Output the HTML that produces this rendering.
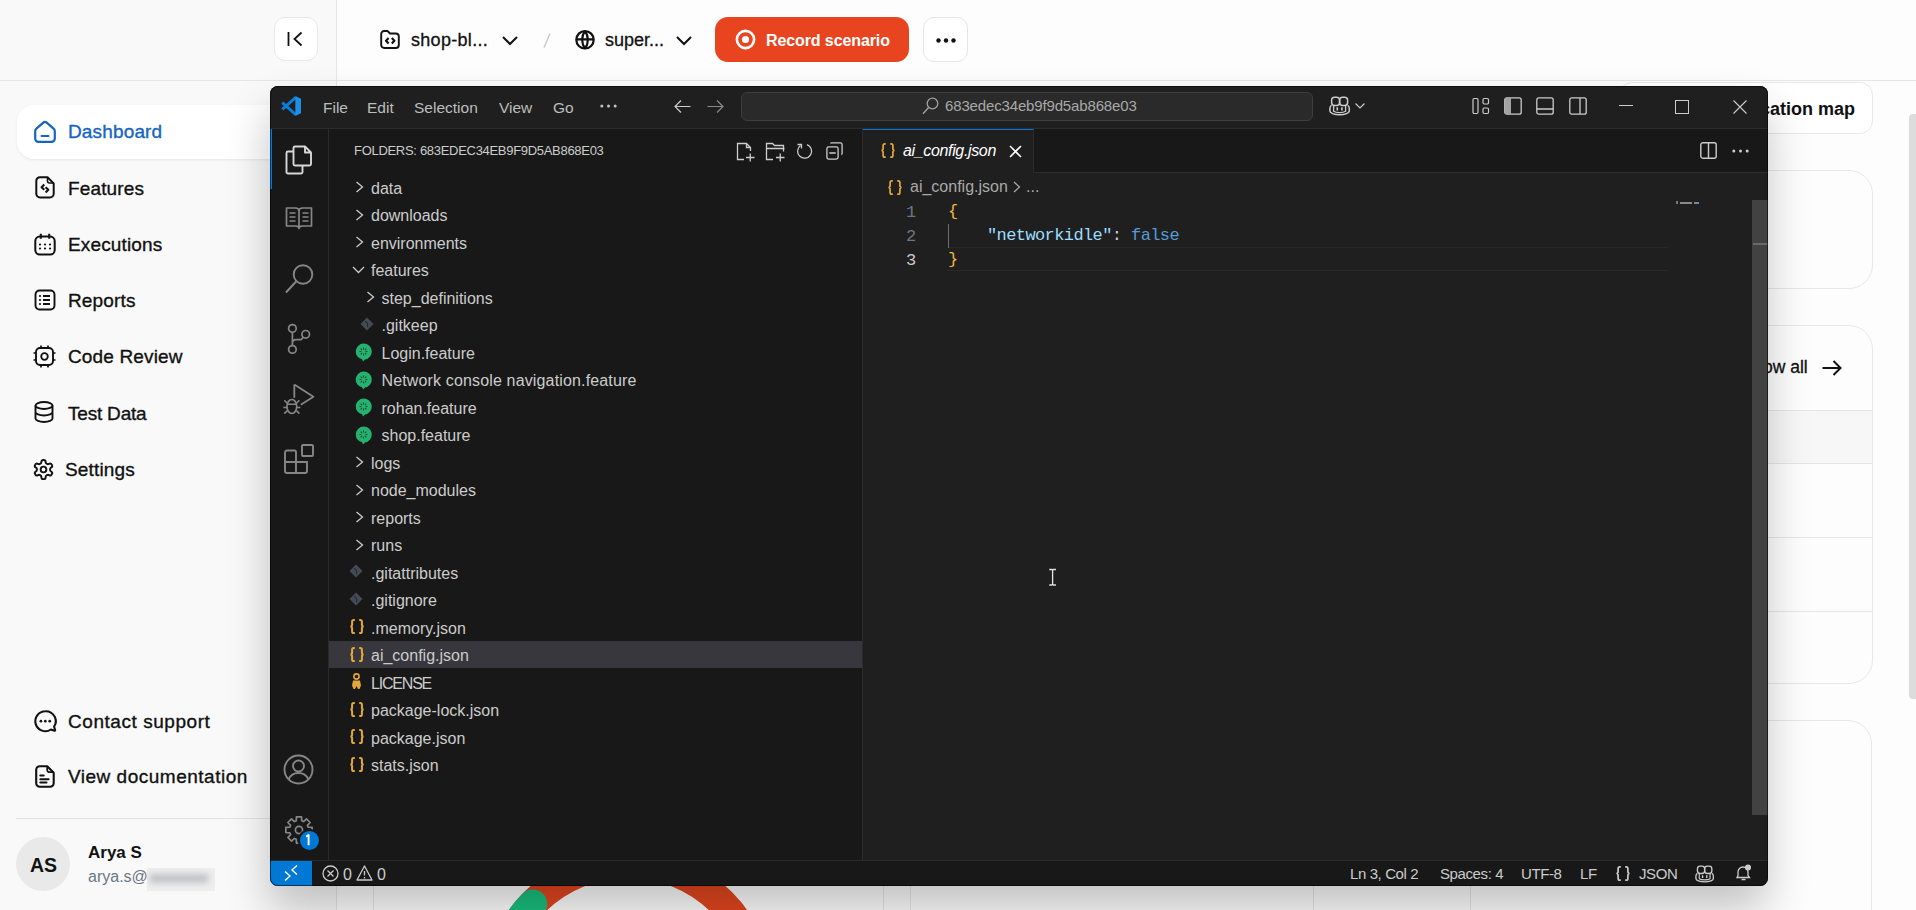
<!DOCTYPE html>
<html><head><meta charset="utf-8">
<style>
*{box-sizing:border-box;margin:0;padding:0}
html,body{width:1916px;height:910px;overflow:hidden;background:#fdfdfd;font-family:"Liberation Sans",sans-serif}
.abs{position:absolute}
svg{position:absolute;overflow:visible}
#side{left:0;top:0;width:337px;height:910px;background:#f9f9f9;border-right:1px solid #e6e6e6}
#hdr{left:337px;top:0;width:1579px;height:80px;background:#fdfdfd}
#hline{left:0;top:80px;width:1916px;height:1px;background:#e6e6e6}
.nav{position:absolute;left:68px;font-size:19px;font-weight:500;color:#111;white-space:nowrap;letter-spacing:0.15px;-webkit-text-stroke:0.35px currentColor}
.vt{position:absolute;white-space:nowrap;color:#cccccc;font-size:16px;line-height:20px}
.row{position:absolute;left:329px;width:533px;height:27.5px}
</style></head>
<body>
<!-- ============ WEB APP ============ -->
<div id="side" class="abs"></div>
<div id="hdr" class="abs"></div>
<div id="hline" class="abs"></div>

<!-- collapse button -->
<div class="abs" style="left:274px;top:17px;width:44px;height:44px;border:1px solid #e8e8e8;border-radius:11px;background:#fff"></div>
<svg style="left:286px;top:29px" width="20" height="20" viewBox="0 0 20 20"><path d="M2.5 3v14M15.5 3.5L8.5 10l7 6.5" fill="none" stroke="#111" stroke-width="1.8"/></svg>

<!-- active nav -->
<div class="abs" style="left:17px;top:105px;width:300px;height:54px;background:#fff;border-radius:17px;box-shadow:0 1px 3px rgba(0,0,0,0.08)"></div>
<svg style="left:34px;top:119.5px" width="22" height="23" viewBox="0 0 22 23"><path d="M2.4 8.6C1.6 9.3 1.2 10.2 1.2 11.2V18.6A3.2 3.2 0 0 0 4.4 21.8H17.6A3.2 3.2 0 0 0 20.8 18.6V11.2C20.8 10.2 20.4 9.3 19.6 8.6L12.7 2.6C11.7 1.7 10.3 1.7 9.3 2.6z" fill="none" stroke="#1565c0" stroke-width="2.2" stroke-linejoin="round"/><path d="M7.6 16h6.8" stroke="#1565c0" stroke-width="2.2" stroke-linecap="round"/></svg>
<div class="nav" style="top:121px;color:#1565c0">Dashboard</div>
<svg style="left:35px;top:176px" width="20" height="23" viewBox="0 0 20 23"><path d="M5 1.2h7.5l6.2 6.2V17.8a3.7 3.7 0 0 1-3.7 3.7H5a3.7 3.7 0 0 1-3.7-3.7V4.9A3.7 3.7 0 0 1 5 1.2z" fill="none" stroke="#111" stroke-width="2" stroke-linejoin="round"/><path d="M12.5 1.5v3.5a2 2 0 0 0 2 2h4" fill="none" stroke="#111" stroke-width="1.6"/><path d="M9.3 8.6L6.6 11.2l2.7 2.6M10.6 11.2l2.7 2.6-2.7 2.6" fill="none" stroke="#111" stroke-width="2.1" stroke-linejoin="round"/></svg>
<div class="nav" style="top:178px">Features</div>
<svg style="left:34px;top:233px" width="22" height="23" viewBox="0 0 22 23"><rect x="1.3" y="3.6" width="19.4" height="18" rx="4.5" fill="none" stroke="#111" stroke-width="2"/><path d="M6.8 0.8v5M15.2 0.8v5" stroke="#111" stroke-width="2"/><g fill="#111"><circle cx="6" cy="11.5" r="1.1"/><circle cx="11" cy="11.5" r="1.1"/><circle cx="16" cy="11.5" r="1.1"/><circle cx="6" cy="15.5" r="1.1"/><circle cx="11" cy="15.5" r="1.1"/><circle cx="16" cy="15.5" r="1.1"/></g></svg>
<div class="nav" style="top:234px">Executions</div>
<svg style="left:34px;top:289px" width="22" height="22" viewBox="0 0 22 22"><rect x="1.5" y="1.5" width="19" height="19" rx="4" fill="none" stroke="#111" stroke-width="1.9"/><path d="M9 7h7M9 11h7M9 15h7" stroke="#111" stroke-width="1.8"/><g fill="#111"><circle cx="6" cy="7" r="1.1"/><circle cx="6" cy="11" r="1.1"/><circle cx="6" cy="15" r="1.1"/></g></svg>
<div class="nav" style="top:290px">Reports</div>
<svg style="left:33px;top:345px" width="23" height="23" viewBox="0 0 23 23"><rect x="3" y="3" width="17" height="17" rx="4" fill="none" stroke="#111" stroke-width="1.9"/><circle cx="11.5" cy="11.5" r="3.3" fill="none" stroke="#111" stroke-width="1.8"/><path d="M8 0.5v2.5M15 0.5v2.5M8 20v2.5M15 20v2.5M0.5 8h2.5M0.5 15h2.5M20 8h2.5M20 15h2.5" stroke="#111" stroke-width="1.7"/></svg>
<div class="nav" style="top:346px">Code Review</div>
<svg style="left:34px;top:401px" width="20" height="22" viewBox="0 0 20 22"><ellipse cx="10" cy="4.5" rx="8.5" ry="3.5" fill="none" stroke="#111" stroke-width="1.9"/><path d="M1.5 4.5v13c0 1.9 3.8 3.5 8.5 3.5s8.5-1.6 8.5-3.5v-13M1.5 11c0 1.9 3.8 3.5 8.5 3.5s8.5-1.6 8.5-3.5" fill="none" stroke="#111" stroke-width="1.9"/></svg>
<div class="nav" style="top:403px;letter-spacing:-0.2px">Test Data</div>
<svg style="left:31.5px;top:457.5px" width="23" height="23" viewBox="0 0 24 24"><path d="M12.22 2h-.44a2 2 0 0 0-2 2v.18a2 2 0 0 1-1 1.73l-.43.25a2 2 0 0 1-2 0l-.15-.08a2 2 0 0 0-2.73.73l-.22.38a2 2 0 0 0 .73 2.73l.15.1a2 2 0 0 1 1 1.72v.51a2 2 0 0 1-1 1.74l-.15.09a2 2 0 0 0-.73 2.730l.22.38a2 2 0 0 0 2.73.73l.15-.08a2 2 0 0 1 2 0l.43.25a2 2 0 0 1 1 1.73V20a2 2 0 0 0 2 2h.44a2 2 0 0 0 2-2v-.18a2 2 0 0 1 1-1.73l.43-.25a2 2 0 0 1 2 0l.15.08a2 2 0 0 0 2.73-.73l.22-.39a2 2 0 0 0-.73-2.73l-.15-.08a2 2 0 0 1-1-1.74v-.5a2 2 0 0 1 1-1.74l.15-.09a2 2 0 0 0 .73-2.73l-.22-.38a2 2 0 0 0-2.73-.73l-.15.08a2 2 0 0 1-2 0l-.43-.25a2 2 0 0 1-1-1.73V4a2 2 0 0 0-2-2z" fill="none" stroke="#111" stroke-width="2" stroke-linejoin="round"/><circle cx="12" cy="12" r="3" fill="none" stroke="#111" stroke-width="2"/></svg>
<div class="nav" style="top:459px;left:65px">Settings</div>

<svg style="left:34px;top:710px" width="23" height="23" viewBox="0 0 23 23"><path d="M11.3 1.2a10 10 0 1 0 5.6 18.3l3.5 1.2c.5.2.9-.3.7-.7l-1-3.3A10 10 0 0 0 11.3 1.2z" fill="none" stroke="#111" stroke-width="2.1" stroke-linejoin="round"/><g fill="#111"><circle cx="6.9" cy="11.2" r="1.35"/><circle cx="11.3" cy="11.2" r="1.35"/><circle cx="15.7" cy="11.2" r="1.35"/></g></svg>
<div class="nav" style="top:711px;letter-spacing:0.55px">Contact support</div>
<svg style="left:35px;top:765px" width="20" height="23" viewBox="0 0 20 23"><path d="M4.8 1.2h7.4l6.5 6.5V18.2a3.6 3.6 0 0 1-3.6 3.6H4.8a3.6 3.6 0 0 1-3.6-3.6V4.8a3.6 3.6 0 0 1 3.6-3.6z" fill="none" stroke="#111" stroke-width="2.1" stroke-linejoin="round"/><path d="M12.2 1.5v3.4a2.3 2.3 0 0 0 2.3 2.3h4" fill="none" stroke="#111" stroke-width="1.7"/><path d="M5.3 10.6h3.4M5.3 14.2h8.3M5.3 17.6h6.2" stroke="#111" stroke-width="2" stroke-linecap="round"/></svg>
<div class="nav" style="top:766px;letter-spacing:0.5px">View documentation</div>
<div class="abs" style="left:16px;top:818px;width:320px;height:1px;background:#e3e3e3"></div>
<div class="abs" style="left:16px;top:837px;width:54px;height:54px;border-radius:50%;background:#e9e9e9"></div>
<div class="abs" style="left:30px;top:854px;font-size:19.5px;font-weight:700;color:#111">AS</div>
<div class="abs" style="left:88px;top:843px;font-size:17px;font-weight:700;color:#111">Arya S</div>
<div class="abs" style="left:88px;top:868px;font-size:16px;color:#6b7684">arya.s@</div>
<div class="abs" style="left:147px;top:868px;width:68px;height:23px;background:#eeeeee;overflow:hidden"><div class="abs" style="left:2px;top:6px;width:60px;height:9px;background:#bfc3c5;filter:blur(3px);border-radius:4px"></div></div>

<!-- header items -->
<svg style="left:380px;top:30px" width="20" height="19" viewBox="0 0 20 19"><path d="M1.2 4a3 3 0 0 1 3-3h3.3l2.5 2.5h5.8a3 3 0 0 1 3 3V15a3 3 0 0 1-3 3H4.2a3 3 0 0 1-3-3z" fill="none" stroke="#111" stroke-width="1.9" stroke-linejoin="round"/><path d="M8.6 8.1L6 10.8 8.6 13.5M11.8 8.1l2.6 2.7-2.6 2.7" fill="none" stroke="#111" stroke-width="2.2" stroke-linejoin="round"/></svg>
<div class="abs" style="left:411px;top:30px;font-size:18px;color:#111;letter-spacing:0.3px;-webkit-text-stroke:0.3px #111">shop-bl...</div>
<svg style="left:502px;top:36px" width="16" height="9" viewBox="0 0 16 9"><path d="M1 1l7 7 7-7" fill="none" stroke="#111" stroke-width="2"/></svg>
<svg style="left:543px;top:33px" width="8" height="15" viewBox="0 0 8 15"><path d="M7 0.5L1 14.5" stroke="#c9c9c9" stroke-width="1.4"/></svg>
<svg style="left:574.5px;top:30px" width="20" height="20" viewBox="0 0 20 20"><circle cx="10" cy="9.8" r="8.7" fill="none" stroke="#111" stroke-width="2.2"/><path d="M1.3 9.4h17.4M10 1.2C6.3 5.5 6.3 14.1 10 18.5M10 1.2c3.7 4.3 3.7 12.9 0 17.3" fill="none" stroke="#111" stroke-width="2.1"/></svg>
<div class="abs" style="left:605px;top:30px;font-size:18px;color:#111;-webkit-text-stroke:0.3px #111">super...</div>
<svg style="left:676px;top:36px" width="16" height="9" viewBox="0 0 16 9"><path d="M1 1l7 7 7-7" fill="none" stroke="#111" stroke-width="2"/></svg>
<div class="abs" style="left:715px;top:17px;width:194px;height:45px;background:#e8441f;border-radius:13px"></div>
<svg style="left:735px;top:29px" width="21" height="21" viewBox="0 0 21 21"><circle cx="10.5" cy="10.5" r="8.6" fill="none" stroke="#fff" stroke-width="2.6"/><circle cx="10.5" cy="10.5" r="3.6" fill="#fff"/></svg>
<div class="abs" style="left:766px;top:32px;font-size:16px;font-weight:700;color:#fff;letter-spacing:-0.1px">Record scenario</div>
<div class="abs" style="left:923px;top:17px;width:45px;height:45px;background:#fff;border:1px solid #e6e6e6;border-radius:11px"></div>
<svg style="left:936px;top:38px" width="20" height="5" viewBox="0 0 20 5"><g fill="#111"><circle cx="2.5" cy="2.5" r="2.2"/><circle cx="10" cy="2.5" r="2.2"/><circle cx="17.5" cy="2.5" r="2.2"/></g></svg>

<!-- right peek content -->
<div class="abs" style="left:1619px;top:82px;width:254px;height:52px;background:#fff;border:1px solid #e8e8e8;border-radius:13px"></div>
<div class="abs" style="left:1760px;top:99px;font-size:18px;font-weight:700;color:#111">cation map</div>
<div class="abs" style="left:1500px;top:170px;width:373px;height:119px;background:#fdfdfd;border:1px solid #e8e8e8;border-radius:24px"></div>
<div class="abs" style="left:1500px;top:325px;width:373px;height:359px;background:#fdfdfd;border:1px solid #e8e8e8;border-radius:24px;overflow:hidden">
  <div class="abs" style="left:0;top:84px;width:373px;height:54px;background:#f7f7f7;border-top:1px solid #e6e6e6;border-bottom:1px solid #e6e6e6"></div>
  <div class="abs" style="left:0;top:211px;width:373px;height:1px;background:#e6e6e6"></div>
  <div class="abs" style="left:0;top:285px;width:373px;height:1px;background:#e6e6e6"></div>
</div>
<div class="abs" style="left:1763px;top:357px;font-size:17.5px;color:#111;-webkit-text-stroke:0.3px #111">ow all</div>
<svg style="left:1822px;top:360px" width="20" height="16" viewBox="0 0 20 16"><path d="M0.5 8h18M11.5 1l7 7-7 7" fill="none" stroke="#111" stroke-width="2"/></svg>
<div class="abs" style="left:910px;top:720px;width:962px;height:300px;background:#fdfdfd;border:1px solid #e8e8e8;border-radius:24px"></div>
<div class="abs" style="left:1909px;top:114px;width:7px;height:585px;background:#dcdcdc;border-radius:4px 0 0 4px"></div>

<!-- bottom under window -->
<div class="abs" style="left:373px;top:700px;width:511px;height:260px;border:1px solid #e6e6e6;background:#fdfdfd;border-radius:24px"></div>
<div class="abs" style="left:1313px;top:860px;width:158px;height:60px;border-left:1px solid #e6e6e6;border-right:1px solid #e6e6e6"></div>
<svg style="left:480px;top:860px" width="300" height="60" viewBox="0 0 300 60"><circle cx="148" cy="136" r="132.5" fill="none" stroke="#e2461f" stroke-width="29"/><path d="M17.5 113 A132.5 132.5 0 0 1 52.7 43.9" fill="none" stroke="#1abf7f" stroke-width="29" stroke-linecap="round"/></svg>

<!-- ============ VS CODE WINDOW ============ -->
<style>
.json{font-size:14px;font-weight:700;color:#e2a63a;letter-spacing:1.5px;font-family:"Liberation Mono",monospace}
.mono{font-family:"Liberation Mono",monospace;font-size:17px;letter-spacing:-0.6px}
</style>
<div id="vs" class="abs" style="left:270px;top:86px;width:1498px;height:800px;background:#1f1f1f;border-radius:8px;overflow:hidden;box-shadow:-1px 24px 44px rgba(0,0,0,0.23)">
<div class="abs" style="left:-270px;top:-86px;width:1916px;height:910px">
<!-- title bar -->
<div class="abs" style="left:270px;top:86px;width:1498px;height:43px;background:#1f1f1f;border-bottom:1px solid #2b2b2b"></div>
<svg style="left:281px;top:96px" width="20" height="20" viewBox="0 0 20 20"><path d="M14.8 1.4L1.3 13.4M14.8 18.6L1.3 6.6" stroke="#0b7fd6" stroke-width="2.9"/><path d="M14.3 0L20 2.8V17.2L14.3 20z" fill="#1f8fe3"/></svg>
<div class="vt" style="left:323px;top:98px;font-size:15.5px;color:#bdbdbd">File</div>
<div class="vt" style="left:367px;top:98px;font-size:15.5px;color:#bdbdbd">Edit</div>
<div class="vt" style="left:414px;top:98px;font-size:15.5px;color:#bdbdbd">Selection</div>
<div class="vt" style="left:499px;top:98px;font-size:15.5px;color:#bdbdbd">View</div>
<div class="vt" style="left:553px;top:98px;font-size:15.5px;color:#bdbdbd">Go</div>
<svg style="left:600px;top:104px" width="17" height="4" viewBox="0 0 17 4"><g fill="#c4c4c4"><circle cx="1.8" cy="2" r="1.5"/><circle cx="8.5" cy="2" r="1.5"/><circle cx="15.2" cy="2" r="1.5"/></g></svg>
<svg style="left:674px;top:100px" width="17" height="13" viewBox="0 0 17 13"><path d="M16.5 6.5H1M7 0.5l-6 6 6 6" fill="none" stroke="#cccccc" stroke-width="1.2"/></svg>
<svg style="left:707px;top:100px" width="17" height="13" viewBox="0 0 17 13"><path d="M0.5 6.5H16M10 0.5l6 6-6 6" fill="none" stroke="#8a8a8a" stroke-width="1.2"/></svg>
<div class="abs" style="left:741px;top:92px;width:572px;height:29px;background:#2a2a2a;border:1px solid #3e3e3e;border-radius:6px"></div>
<svg style="left:922px;top:97px" width="17" height="18" viewBox="0 0 17 18"><circle cx="10.5" cy="6.5" r="5.3" fill="none" stroke="#a0a0a0" stroke-width="1.3"/><path d="M6.8 10.3L1 16.8" stroke="#a0a0a0" stroke-width="1.4"/></svg>
<div class="vt" style="left:945px;top:96px;font-size:15px;letter-spacing:-0.15px;color:#a8a8a8">683edec34eb9f9d5ab868e03</div>
<svg style="left:1329px;top:96px" width="22" height="20" viewBox="0 0 22 20"><rect x="2.6" y="1.2" width="8" height="8.2" rx="3" fill="none" stroke="#cccccc" stroke-width="1.5"/><rect x="10.6" y="1.2" width="8" height="8.2" rx="3" fill="none" stroke="#cccccc" stroke-width="1.5"/><path d="M2.6 9.4C1.2 10 0.9 11 0.9 12.5V15C0.9 17 5 18.8 10.6 18.8S20.3 17 20.3 15V12.5C20.3 11 20 10 18.6 9.4" fill="none" stroke="#cccccc" stroke-width="1.5"/><path d="M4.6 9.6V15.3C6 16.2 8 16.6 10.6 16.6S15.2 16.2 16.6 15.3V9.6" fill="none" stroke="#cccccc" stroke-width="1.3"/><path d="M8.3 11.3v3.2M12.9 11.3v3.2" stroke="#cccccc" stroke-width="1.6"/></svg>
<svg style="left:1355px;top:103px" width="10" height="6" viewBox="0 0 10 6"><path d="M0.5 0.5l4.5 4.5 4.5-4.5" fill="none" stroke="#cccccc" stroke-width="1.1"/></svg>
<svg style="left:1472px;top:97px" width="18" height="18" viewBox="0 0 18 18"><rect x="1" y="1.5" width="5" height="15" rx="1.2" fill="none" stroke="#cccccc" stroke-width="1.2"/><rect x="11" y="1.5" width="5.5" height="5.5" rx="1.2" fill="none" stroke="#cccccc" stroke-width="1.2"/><rect x="11" y="11" width="5.5" height="5.5" rx="1.2" fill="none" stroke="#cccccc" stroke-width="1.2"/></svg>
<svg style="left:1504px;top:97px" width="18" height="18" viewBox="0 0 18 18"><rect x="0.8" y="0.8" width="16.4" height="16.4" rx="2" fill="none" stroke="#cccccc" stroke-width="1.3"/><rect x="1" y="1" width="6" height="16" fill="#a3a3a3"/></svg>
<svg style="left:1536px;top:97px" width="18" height="18" viewBox="0 0 18 18"><rect x="0.8" y="0.8" width="16.4" height="16.4" rx="2" fill="none" stroke="#cccccc" stroke-width="1.3"/><path d="M1 12h16" stroke="#cccccc" stroke-width="1.3"/></svg>
<svg style="left:1569px;top:97px" width="18" height="18" viewBox="0 0 18 18"><rect x="0.8" y="0.8" width="16.4" height="16.4" rx="2" fill="none" stroke="#cccccc" stroke-width="1.3"/><path d="M11 1v16" stroke="#cccccc" stroke-width="1.3"/></svg>
<div class="abs" style="left:1619px;top:105px;width:14px;height:1px;background:#cccccc"></div>
<div class="abs" style="left:1675px;top:100px;width:14px;height:14px;border:1px solid #cccccc"></div>
<svg style="left:1733px;top:100px" width="14" height="14" viewBox="0 0 14 14"><path d="M0.5 0.5l13 13M13.5 0.5l-13 13" stroke="#cccccc" stroke-width="1.1"/></svg>

<!-- activity bar -->
<div class="abs" style="left:270px;top:129px;width:59px;height:731px;background:#181818;border-right:1px solid #2b2b2b"></div>
<div class="abs" style="left:270px;top:129px;width:1.6px;height:60px;background:#0078d4"></div>
<svg style="left:284px;top:144px" width="30" height="30" viewBox="0 0 30 30"><path d="M11 2.5h10l6 6V20a1.5 1.5 0 0 1-1.5 1.5H11A1.5 1.5 0 0 1 9.5 20V4A1.5 1.5 0 0 1 11 2.5z M21 2.5v6h6" fill="none" stroke="#d7d7d7" stroke-width="1.9" stroke-linejoin="round"/><path d="M9.5 7.5H4A1.5 1.5 0 0 0 2.5 9V28A1.5 1.5 0 0 0 4 29.5H17A1.5 1.5 0 0 0 18.5 28v-6.5" fill="none" stroke="#d7d7d7" stroke-width="1.9"/></svg>
<svg style="left:285px;top:205px" width="28" height="26" viewBox="0 0 28 26"><path d="M1.5 3h9c2 0 3.5 1 3.5 3v17.5c0-1.5-1.5-2.5-3.5-2.5h-9z M26.5 3h-9c-2 0-3.5 1-3.5 3v17.5c0-1.5 1.5-2.5 3.5-2.5h9z" fill="none" stroke="#868686" stroke-width="1.7" stroke-linejoin="round"/><path d="M4.5 8h6M4.5 12h6M4.5 16h6M17.5 8h6M17.5 12h6M17.5 16h6" stroke="#868686" stroke-width="1.5"/></svg>
<svg style="left:284px;top:262px" width="32" height="32" viewBox="0 0 32 32"><circle cx="19" cy="12.5" r="9.3" fill="none" stroke="#868686" stroke-width="1.9"/><path d="M12.3 19.3L2 30.5" stroke="#868686" stroke-width="2"/></svg>
<svg style="left:284px;top:322px" width="30" height="32" viewBox="0 0 30 32"><circle cx="8.4" cy="6.4" r="3.8" fill="none" stroke="#868686" stroke-width="1.7"/><circle cx="8.4" cy="27.4" r="3.8" fill="none" stroke="#868686" stroke-width="1.7"/><circle cx="21.7" cy="12.3" r="3.8" fill="none" stroke="#868686" stroke-width="1.7"/><path d="M8.4 10.2V23.6M19.2 15.2L17.6 17.1C17.2 17.5 16.8 17.7 16.2 17.7H12C9.8 17.7 8.4 19.3 8.4 21.5" fill="none" stroke="#868686" stroke-width="1.7"/></svg>
<svg style="left:282px;top:383px" width="34" height="32" viewBox="0 0 34 32"><path d="M12.3 1.4V14.8M12.3 1.4L31.4 13.8 18.8 21.7" fill="none" stroke="#868686" stroke-width="1.8" stroke-linejoin="round"/><ellipse cx="9.85" cy="23.5" rx="4.9" ry="7" fill="none" stroke="#868686" stroke-width="1.7"/><path d="M5 21.2h9.7M2.3 17.3l3 3M17.4 17.3l-3 3M1.3 24.5h3.6M14.8 24.5h3.6M2.3 30.6l3-3M17.4 30.6l-3-3" fill="none" stroke="#868686" stroke-width="1.6"/></svg>
<svg style="left:283px;top:443px" width="32" height="33" viewBox="0 0 32 33"><path d="M4 7.5h7.5a1.5 1.5 0 0 1 1.5 1.5V30H4a2 2 0 0 1-2-2V9.5a2 2 0 0 1 2-2z M13 19H2 M13 30h9a2 2 0 0 0 2-2V19H13" fill="none" stroke="#868686" stroke-width="1.9"/><rect x="19" y="2" width="11" height="11" rx="1" fill="none" stroke="#868686" stroke-width="1.9"/></svg>
<svg style="left:283px;top:754px" width="31" height="31" viewBox="0 0 31 31"><circle cx="15.5" cy="15.5" r="14" fill="none" stroke="#868686" stroke-width="1.9"/><circle cx="15.5" cy="12" r="5.5" fill="none" stroke="#868686" stroke-width="1.9"/><path d="M5.5 25.5c2-4.5 6-6.5 10-6.5s8 2 10 6.5" fill="none" stroke="#868686" stroke-width="1.9"/></svg>
<svg style="left:283px;top:813.5px" width="32" height="32" viewBox="0 0 32 32"><path d="M13.27 6.80 L13.44 2.85 L18.56 2.85 L18.73 6.80 L20.58 7.56 L23.49 4.89 L27.11 8.51 L24.44 11.42 L25.20 13.27 L29.15 13.44 L29.15 18.56 L25.20 18.73 L24.44 20.58 L27.11 23.49 L23.49 27.11 L20.58 24.44 L18.73 25.20 L18.56 29.15 L13.44 29.15 L13.27 25.20 L11.42 24.44 L8.51 27.11 L4.89 23.49 L7.56 20.58 L6.80 18.73 L2.85 18.56 L2.85 13.44 L6.80 13.27 L7.56 11.42 L4.89 8.51 L8.51 4.89 L11.42 7.56z" fill="none" stroke="#868686" stroke-width="1.7" stroke-linejoin="round"/><circle cx="16" cy="16" r="3.6" fill="none" stroke="#868686" stroke-width="1.7"/></svg>
<div class="abs" style="left:297.5px;top:828.5px;width:23px;height:23px;border-radius:50%;background:#0078d4;border:2px solid #181818"></div>
<svg style="left:304px;top:834px" width="8" height="12" viewBox="0 0 8 12"><path d="M2.2 2.6L4.6 1V11.2" fill="none" stroke="#fff" stroke-width="1.9" stroke-linejoin="round"/></svg>

<!-- sidebar -->
<div class="abs" style="left:329px;top:129px;width:534px;height:731px;background:#181818;border-right:1px solid #2b2b2b"></div>
<div class="vt" style="left:354px;top:141px;font-size:13px;letter-spacing:-0.3px">FOLDERS: 683EDEC34EB9F9D5AB868E03</div>
<svg style="left:736px;top:142px" width="20" height="20" viewBox="0 0 20 20"><path d="M8 17.5H1.5V1.5h9l4 4V9 M10.5 1.5v4h4" fill="none" stroke="#cccccc" stroke-width="1.3"/><path d="M10 15.5h8.5M14.25 11.5v8" stroke="#cccccc" stroke-width="1.3"/></svg>
<svg style="left:765px;top:142px" width="21" height="20" viewBox="0 0 21 20"><path d="M8 17.5H1.5V1.5h6l2 2h9v6 M1.5 6.5h18" fill="none" stroke="#cccccc" stroke-width="1.3"/><path d="M11 15.5h8.5M15.25 11.5v8" stroke="#cccccc" stroke-width="1.3"/></svg>
<svg style="left:796px;top:143px" width="17" height="17" viewBox="0 0 17 17"><path d="M4.5 2.5A7 7 0 1 0 11 1.6" fill="none" stroke="#cccccc" stroke-width="1.3"/><path d="M1.5 1.5h4v4" fill="none" stroke="#cccccc" stroke-width="1.3"/></svg>
<svg style="left:826px;top:142px" width="17" height="18" viewBox="0 0 17 18"><rect x="0.9" y="4.9" width="11.2" height="12.2" rx="1.8" fill="none" stroke="#cccccc" stroke-width="1.3"/><path d="M4.5 1.5A1.3 1.3 0 0 1 5.5 0.9H14.3A1.8 1.8 0 0 1 16.1 2.7V11.5A1.3 1.3 0 0 1 15.3 12.6" fill="none" stroke="#cccccc" stroke-width="1.3"/><path d="M3.3 11h6.4" stroke="#cccccc" stroke-width="1.3"/></svg>
<div class="abs" style="left:329px;top:641px;width:533px;height:27px;background:#37373d"></div>
<svg style="left:355.0px;top:181.0px" width="9" height="12" viewBox="0 0 9 12"><path d="M1.5 1l6 5-6 5" fill="none" stroke="#cccccc" stroke-width="1.3"/></svg>
<div class="vt" style="left:371.0px;top:178.5px">data</div>
<svg style="left:355.0px;top:208.5px" width="9" height="12" viewBox="0 0 9 12"><path d="M1.5 1l6 5-6 5" fill="none" stroke="#cccccc" stroke-width="1.3"/></svg>
<div class="vt" style="left:371.0px;top:206.0px">downloads</div>
<svg style="left:355.0px;top:236.0px" width="9" height="12" viewBox="0 0 9 12"><path d="M1.5 1l6 5-6 5" fill="none" stroke="#cccccc" stroke-width="1.3"/></svg>
<div class="vt" style="left:371.0px;top:233.5px">environments</div>
<svg style="left:352.0px;top:265.5px" width="13" height="8" viewBox="0 0 13 8"><path d="M1 1l5.5 5.5L12 1" fill="none" stroke="#cccccc" stroke-width="1.3"/></svg>
<div class="vt" style="left:371.0px;top:261.0px">features</div>
<svg style="left:365.5px;top:291.0px" width="9" height="12" viewBox="0 0 9 12"><path d="M1.5 1l6 5-6 5" fill="none" stroke="#cccccc" stroke-width="1.3"/></svg>
<div class="vt" style="left:381.5px;top:288.5px">step_definitions</div>
<svg style="left:359.5px;top:316.5px" width="14" height="14" viewBox="0 0 14 14"><path d="M7 0.5L13.5 7 7 13.5 0.5 7z" fill="#454a54"/><path d="M5.2 4.2l2.6 2.6M7.6 7v3.2" stroke="#24282f" stroke-width="1.1"/></svg>
<div class="vt" style="left:381.5px;top:316.0px">.gitkeep</div>
<svg style="left:355px;top:343.0px" width="17" height="19" viewBox="0 0 17 19"><path d="M8.5 0.5a8 8 0 0 1 1.5 15.9L8 18.5l-1-2.2A8 8 0 0 1 8.5 0.5z" fill="#23b36e"/><g stroke="#1a4d3a" stroke-width="1.1"><path d="M8.5 4.5v2M8.5 10.5v2M4.5 8.5h2M10.5 8.5h2M5.7 5.7l1.3 1.3M10 10l1.3 1.3M11.3 5.7L10 7M7 10l-1.3 1.3"/></g></svg>
<div class="vt" style="left:381.5px;top:343.5px">Login.feature</div>
<svg style="left:355px;top:370.5px" width="17" height="19" viewBox="0 0 17 19"><path d="M8.5 0.5a8 8 0 0 1 1.5 15.9L8 18.5l-1-2.2A8 8 0 0 1 8.5 0.5z" fill="#23b36e"/><g stroke="#1a4d3a" stroke-width="1.1"><path d="M8.5 4.5v2M8.5 10.5v2M4.5 8.5h2M10.5 8.5h2M5.7 5.7l1.3 1.3M10 10l1.3 1.3M11.3 5.7L10 7M7 10l-1.3 1.3"/></g></svg>
<div class="vt" style="left:381.5px;top:371.0px;letter-spacing:0.15px">Network console navigation.feature</div>
<svg style="left:355px;top:398.0px" width="17" height="19" viewBox="0 0 17 19"><path d="M8.5 0.5a8 8 0 0 1 1.5 15.9L8 18.5l-1-2.2A8 8 0 0 1 8.5 0.5z" fill="#23b36e"/><g stroke="#1a4d3a" stroke-width="1.1"><path d="M8.5 4.5v2M8.5 10.5v2M4.5 8.5h2M10.5 8.5h2M5.7 5.7l1.3 1.3M10 10l1.3 1.3M11.3 5.7L10 7M7 10l-1.3 1.3"/></g></svg>
<div class="vt" style="left:381.5px;top:398.5px">rohan.feature</div>
<svg style="left:355px;top:425.5px" width="17" height="19" viewBox="0 0 17 19"><path d="M8.5 0.5a8 8 0 0 1 1.5 15.9L8 18.5l-1-2.2A8 8 0 0 1 8.5 0.5z" fill="#23b36e"/><g stroke="#1a4d3a" stroke-width="1.1"><path d="M8.5 4.5v2M8.5 10.5v2M4.5 8.5h2M10.5 8.5h2M5.7 5.7l1.3 1.3M10 10l1.3 1.3M11.3 5.7L10 7M7 10l-1.3 1.3"/></g></svg>
<div class="vt" style="left:381.5px;top:426.0px">shop.feature</div>
<svg style="left:355.0px;top:456.0px" width="9" height="12" viewBox="0 0 9 12"><path d="M1.5 1l6 5-6 5" fill="none" stroke="#cccccc" stroke-width="1.3"/></svg>
<div class="vt" style="left:371.0px;top:453.5px">logs</div>
<svg style="left:355.0px;top:483.5px" width="9" height="12" viewBox="0 0 9 12"><path d="M1.5 1l6 5-6 5" fill="none" stroke="#cccccc" stroke-width="1.3"/></svg>
<div class="vt" style="left:371.0px;top:481.0px">node_modules</div>
<svg style="left:355.0px;top:511.0px" width="9" height="12" viewBox="0 0 9 12"><path d="M1.5 1l6 5-6 5" fill="none" stroke="#cccccc" stroke-width="1.3"/></svg>
<div class="vt" style="left:371.0px;top:508.5px">reports</div>
<svg style="left:355.0px;top:538.5px" width="9" height="12" viewBox="0 0 9 12"><path d="M1.5 1l6 5-6 5" fill="none" stroke="#cccccc" stroke-width="1.3"/></svg>
<div class="vt" style="left:371.0px;top:536.0px">runs</div>
<svg style="left:349.0px;top:564.0px" width="14" height="14" viewBox="0 0 14 14"><path d="M7 0.5L13.5 7 7 13.5 0.5 7z" fill="#454a54"/><path d="M5.2 4.2l2.6 2.6M7.6 7v3.2" stroke="#24282f" stroke-width="1.1"/></svg>
<div class="vt" style="left:371.0px;top:563.5px">.gitattributes</div>
<svg style="left:349.0px;top:591.5px" width="14" height="14" viewBox="0 0 14 14"><path d="M7 0.5L13.5 7 7 13.5 0.5 7z" fill="#454a54"/><path d="M5.2 4.2l2.6 2.6M7.6 7v3.2" stroke="#24282f" stroke-width="1.1"/></svg>
<div class="vt" style="left:371.0px;top:591.0px">.gitignore</div>
<svg style="left:349.5px;top:619.0px" width="14" height="15" viewBox="0 0 14 15"><path d="M4.8 0.9H3.8C2.7 0.9 2.1 1.5 2.1 2.6V5.6C2.1 6.7 1.6 7.5 0.4 7.5 1.6 7.5 2.1 8.3 2.1 9.4V12.4C2.1 13.5 2.7 14.1 3.8 14.1H4.8M9.2 0.9H10.2C11.3 0.9 11.9 1.5 11.9 2.6V5.6C11.9 6.7 12.4 7.5 13.6 7.5 12.4 7.5 11.9 8.3 11.9 9.4V12.4C11.9 13.5 11.3 14.1 10.2 14.1H9.2" fill="none" stroke="#e2a83a" stroke-width="2"/></svg>
<div class="vt" style="left:371.0px;top:618.5px">.memory.json</div>
<svg style="left:349.5px;top:646.5px" width="14" height="15" viewBox="0 0 14 15"><path d="M4.8 0.9H3.8C2.7 0.9 2.1 1.5 2.1 2.6V5.6C2.1 6.7 1.6 7.5 0.4 7.5 1.6 7.5 2.1 8.3 2.1 9.4V12.4C2.1 13.5 2.7 14.1 3.8 14.1H4.8M9.2 0.9H10.2C11.3 0.9 11.9 1.5 11.9 2.6V5.6C11.9 6.7 12.4 7.5 13.6 7.5 12.4 7.5 11.9 8.3 11.9 9.4V12.4C11.9 13.5 11.3 14.1 10.2 14.1H9.2" fill="none" stroke="#e2a83a" stroke-width="2"/></svg>
<div class="vt" style="left:371.0px;top:646.0px">ai_config.json</div>
<svg style="left:351px;top:673.0px" width="11" height="17" viewBox="0 0 11 17"><circle cx="5.5" cy="3.5" r="2.6" fill="none" stroke="#e2a63a" stroke-width="1.6"/><path d="M2 7.5h7l1 5-1.5 3.5H7L5.5 13 4 16H2.5L1 12.5z" fill="#e2a63a"/></svg>
<div class="vt" style="left:371.0px;top:673.5px;letter-spacing:-1.2px">LICENSE</div>
<svg style="left:349.5px;top:701.5px" width="14" height="15" viewBox="0 0 14 15"><path d="M4.8 0.9H3.8C2.7 0.9 2.1 1.5 2.1 2.6V5.6C2.1 6.7 1.6 7.5 0.4 7.5 1.6 7.5 2.1 8.3 2.1 9.4V12.4C2.1 13.5 2.7 14.1 3.8 14.1H4.8M9.2 0.9H10.2C11.3 0.9 11.9 1.5 11.9 2.6V5.6C11.9 6.7 12.4 7.5 13.6 7.5 12.4 7.5 11.9 8.3 11.9 9.4V12.4C11.9 13.5 11.3 14.1 10.2 14.1H9.2" fill="none" stroke="#e2a83a" stroke-width="2"/></svg>
<div class="vt" style="left:371.0px;top:701.0px">package-lock.json</div>
<svg style="left:349.5px;top:729.0px" width="14" height="15" viewBox="0 0 14 15"><path d="M4.8 0.9H3.8C2.7 0.9 2.1 1.5 2.1 2.6V5.6C2.1 6.7 1.6 7.5 0.4 7.5 1.6 7.5 2.1 8.3 2.1 9.4V12.4C2.1 13.5 2.7 14.1 3.8 14.1H4.8M9.2 0.9H10.2C11.3 0.9 11.9 1.5 11.9 2.6V5.6C11.9 6.7 12.4 7.5 13.6 7.5 12.4 7.5 11.9 8.3 11.9 9.4V12.4C11.9 13.5 11.3 14.1 10.2 14.1H9.2" fill="none" stroke="#e2a83a" stroke-width="2"/></svg>
<div class="vt" style="left:371.0px;top:728.5px">package.json</div>
<svg style="left:349.5px;top:756.5px" width="14" height="15" viewBox="0 0 14 15"><path d="M4.8 0.9H3.8C2.7 0.9 2.1 1.5 2.1 2.6V5.6C2.1 6.7 1.6 7.5 0.4 7.5 1.6 7.5 2.1 8.3 2.1 9.4V12.4C2.1 13.5 2.7 14.1 3.8 14.1H4.8M9.2 0.9H10.2C11.3 0.9 11.9 1.5 11.9 2.6V5.6C11.9 6.7 12.4 7.5 13.6 7.5 12.4 7.5 11.9 8.3 11.9 9.4V12.4C11.9 13.5 11.3 14.1 10.2 14.1H9.2" fill="none" stroke="#e2a83a" stroke-width="2"/></svg>
<div class="vt" style="left:371.0px;top:756.0px">stats.json</div>

<!-- editor -->
<div class="abs" style="left:863px;top:129px;width:905px;height:44px;background:#181818;border-bottom:1px solid #2b2b2b"></div>
<div class="abs" style="left:863px;top:129px;width:171px;height:44px;background:#1f1f1f;border-right:1px solid #2b2b2b;border-top:1px solid #0078d4"></div>
<svg style="left:880.5px;top:143px" width="14" height="15" viewBox="0 0 14 15"><path d="M4.8 0.9H3.8C2.7 0.9 2.1 1.5 2.1 2.6V5.6C2.1 6.7 1.6 7.5 0.4 7.5 1.6 7.5 2.1 8.3 2.1 9.4V12.4C2.1 13.5 2.7 14.1 3.8 14.1H4.8M9.2 0.9H10.2C11.3 0.9 11.9 1.5 11.9 2.6V5.6C11.9 6.7 12.4 7.5 13.6 7.5 12.4 7.5 11.9 8.3 11.9 9.4V12.4C11.9 13.5 11.3 14.1 10.2 14.1H9.2" fill="none" stroke="#e2a83a" stroke-width="1.7"/></svg>
<div class="vt" style="left:903px;top:141px;font-style:italic;color:#ffffff;letter-spacing:-0.35px">ai_config.json</div>
<svg style="left:1009px;top:145px" width="13" height="13" viewBox="0 0 13 13"><path d="M1 1l11 11M12 1L1 12" stroke="#ffffff" stroke-width="1.6"/></svg>
<svg style="left:1700px;top:142px" width="17" height="17" viewBox="0 0 17 17"><rect x="0.8" y="0.8" width="15.4" height="15.4" rx="2" fill="none" stroke="#cccccc" stroke-width="1.4"/><path d="M8.5 1v15" stroke="#cccccc" stroke-width="1.4"/></svg>
<svg style="left:1732px;top:149px" width="17" height="4" viewBox="0 0 17 4"><g fill="#cccccc"><circle cx="1.8" cy="2" r="1.5"/><circle cx="8.5" cy="2" r="1.5"/><circle cx="15.2" cy="2" r="1.5"/></g></svg>
<svg style="left:888px;top:180px" width="14" height="15" viewBox="0 0 14 15"><path d="M4.8 0.9H3.8C2.7 0.9 2.1 1.5 2.1 2.6V5.6C2.1 6.7 1.6 7.5 0.4 7.5 1.6 7.5 2.1 8.3 2.1 9.4V12.4C2.1 13.5 2.7 14.1 3.8 14.1H4.8M9.2 0.9H10.2C11.3 0.9 11.9 1.5 11.9 2.6V5.6C11.9 6.7 12.4 7.5 13.6 7.5 12.4 7.5 11.9 8.3 11.9 9.4V12.4C11.9 13.5 11.3 14.1 10.2 14.1H9.2" fill="none" stroke="#e2a83a" stroke-width="1.7"/></svg>
<div class="vt" style="left:910px;top:177px;color:#a9a9a9">ai_config.json</div>
<svg style="left:1013px;top:181px" width="8" height="12" viewBox="0 0 8 12"><path d="M1 1l5.5 5-5.5 5" fill="none" stroke="#a9a9a9" stroke-width="1.2"/></svg>
<div class="vt" style="left:1026px;top:177px;color:#a9a9a9">...</div>
<!-- code -->
<div class="abs" style="left:948px;top:247px;width:720px;height:24px;border-top:1px solid #282828;border-bottom:1px solid #282828"></div>
<div class="abs" style="left:948px;top:224px;width:1px;height:24px;background:#6e6e6e"></div>
<div class="vt mono" style="left:906px;top:203px;color:#6e7681">1</div>
<div class="vt mono" style="left:906px;top:227px;color:#6e7681">2</div>
<div class="vt mono" style="left:906px;top:251px;color:#cccccc">3</div>
<div class="vt mono" style="left:948px;top:202px;color:#efb83a">{</div>
<div class="vt mono" style="left:987px;top:226px;color:#9cdcfe">"networkidle"<span style="color:#cccccc">: </span><span style="color:#569cd6">false</span></div>
<div class="vt mono" style="left:948px;top:250px;color:#efb83a">}</div>
<!-- minimap -->
<div class="abs" style="left:1676px;top:201px;width:2px;height:3px;background:#777"></div>
<div class="abs" style="left:1680px;top:202px;width:12px;height:2px;background:#8a8a8a"></div>
<div class="abs" style="left:1694px;top:202px;width:5px;height:2px;background:#6a8aaa"></div>
<!-- scrollbar -->
<div class="abs" style="left:1752px;top:200px;width:16px;height:615px;background:#424242"></div>
<div class="abs" style="left:1753px;top:243px;width:15px;height:2px;background:#6a6a6a"></div>
<!-- mouse cursor -->
<svg style="left:1048px;top:568px" width="10" height="19" viewBox="0 0 10 19"><path d="M1.3 1.5H3.8L4.6 2.2 5.4 1.5H7.9M4.6 2.2V16.3M1.3 17H3.8L4.6 16.3 5.4 17H7.9" fill="none" stroke="#e6e6e6" stroke-width="1.3"/></svg>

<!-- status bar -->
<div class="abs" style="left:270px;top:860px;width:1498px;height:26px;background:#181818;border-top:1px solid #2b2b2b"></div>
<div class="abs" style="left:270px;top:861px;width:42px;height:25px;background:#0078d4"></div>
<svg style="left:284px;top:865px" width="14" height="16" viewBox="0 0 14 16"><path d="M1 6.5l5 4.5-5 4.5M13 0.5L8 5l5 4.5" fill="none" stroke="#ffffff" stroke-width="1.4"/></svg>
<svg style="left:322px;top:865px" width="17" height="17" viewBox="0 0 17 17"><circle cx="8.5" cy="8.5" r="7.5" fill="none" stroke="#cccccc" stroke-width="1.3"/><path d="M5.5 5.5l6 6M11.5 5.5l-6 6" stroke="#cccccc" stroke-width="1.3"/></svg>
<div class="vt" style="left:343px;top:865px;font-size:16px">0</div>
<svg style="left:356px;top:865px" width="17" height="16" viewBox="0 0 17 16"><path d="M8.5 1L16 15H1z" fill="none" stroke="#cccccc" stroke-width="1.3" stroke-linejoin="round"/><path d="M8.5 6v4.5M8.5 12v1.5" stroke="#cccccc" stroke-width="1.3"/></svg>
<div class="vt" style="left:377px;top:865px;font-size:16px">0</div>
<div class="vt" style="left:1350px;top:864px;font-size:15px;letter-spacing:-0.4px">Ln 3, Col 2</div>
<div class="vt" style="left:1440px;top:864px;font-size:15px;letter-spacing:-0.4px">Spaces: 4</div>
<div class="vt" style="left:1521px;top:864px;font-size:15px;letter-spacing:-0.4px">UTF-8</div>
<div class="vt" style="left:1580px;top:864px;font-size:15px;letter-spacing:-0.4px">LF</div>
<svg style="left:1616px;top:866px" width="14" height="15" viewBox="0 0 14 15"><path d="M4.8 0.9H3.8C2.7 0.9 2.1 1.5 2.1 2.6V5.6C2.1 6.7 1.6 7.5 0.4 7.5 1.6 7.5 2.1 8.3 2.1 9.4V12.4C2.1 13.5 2.7 14.1 3.8 14.1H4.8M9.2 0.9H10.2C11.3 0.9 11.9 1.5 11.9 2.6V5.6C11.9 6.7 12.4 7.5 13.6 7.5 12.4 7.5 11.9 8.3 11.9 9.4V12.4C11.9 13.5 11.3 14.1 10.2 14.1H9.2" fill="none" stroke="#cccccc" stroke-width="1.7"/></svg>
<div class="vt" style="left:1639px;top:864px;font-size:15px;letter-spacing:-0.4px">JSON</div>
<svg style="left:1695px;top:865px" width="20" height="18" viewBox="0 0 22 20"><rect x="2.6" y="1.2" width="8" height="8.2" rx="3" fill="none" stroke="#cccccc" stroke-width="1.5"/><rect x="10.6" y="1.2" width="8" height="8.2" rx="3" fill="none" stroke="#cccccc" stroke-width="1.5"/><path d="M2.6 9.4C1.2 10 0.9 11 0.9 12.5V15C0.9 17 5 18.8 10.6 18.8S20.3 17 20.3 15V12.5C20.3 11 20 10 18.6 9.4" fill="none" stroke="#cccccc" stroke-width="1.5"/><path d="M4.6 9.6V15.3C6 16.2 8 16.6 10.6 16.6S15.2 16.2 16.6 15.3V9.6" fill="none" stroke="#cccccc" stroke-width="1.3"/><path d="M8.3 11.3v3.2M12.9 11.3v3.2" stroke="#cccccc" stroke-width="1.6"/></svg>
<svg style="left:1735px;top:864px" width="17" height="18" viewBox="0 0 17 18"><path d="M2 13.5h12.5l-1.5-2V8a5 5 0 0 0-5-5 5 5 0 0 0-5 5v3.5z" fill="none" stroke="#cccccc" stroke-width="1.3"/><path d="M6.5 15.5h4" stroke="#cccccc" stroke-width="1.5"/><circle cx="13" cy="3.5" r="3" fill="#cccccc"/></svg>
</div>
<div class="abs" style="left:0;top:0;width:1498px;height:800px;border:1px solid rgba(0,0,0,0.55);border-radius:8px"></div>
</div>
</body></html>
